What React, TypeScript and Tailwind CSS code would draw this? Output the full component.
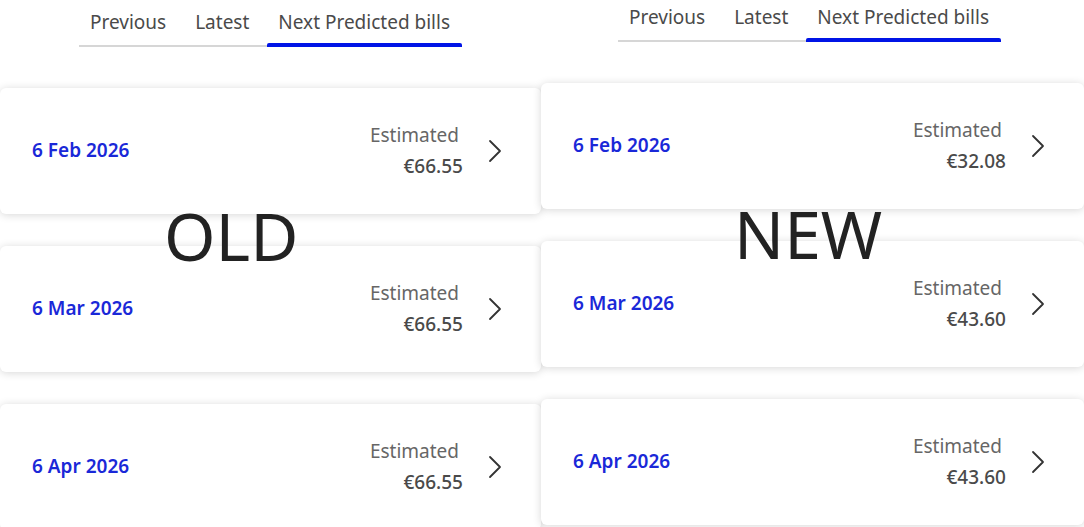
type Bill = { date: string; amount: string };

const oldBills: Bill[] = [
  { date: '6 Feb 2026', amount: '€66.55' },
  { date: '6 Mar 2026', amount: '€66.55' },
  { date: '6 Apr 2026', amount: '€66.55' },
];

const newBills: Bill[] = [
  { date: '6 Feb 2026', amount: '€32.08' },
  { date: '6 Mar 2026', amount: '€43.60' },
  { date: '6 Apr 2026', amount: '€43.60' },
];

function Tabs({ shift }: { shift: string }) {
  return (
    <div className={`flex justify-center ${shift}`}>
      <div className="flex border-b-2 border-[#d6d6d6]">
        <div className="px-[11px] pb-[8px] text-[#4a4a4a]">Previous</div>
        <div className="ml-[7px] px-[11px] pb-[8px] text-[#4a4a4a]">Latest</div>
        <div className="relative ml-[7px] pl-[11px] pr-[12px] pb-[8px] text-[#4a4a4a]">
          Next Predicted bills
          <span className="absolute -bottom-[2px] left-0 right-0 h-[4px] rounded-t-[2px] bg-[#0014e6]" />
        </div>
      </div>
    </div>
  );
}

function Chevron() {
  return (
    <svg width="14" height="24" viewBox="0 0 14 24" fill="none" className="ml-[25px] text-[#333333]">
      <polyline points="2,2 12,12 2,22" stroke="currentColor" strokeWidth="1.8" strokeLinecap="round" strokeLinejoin="round" />
    </svg>
  );
}

function BillCard({ bill }: { bill: Bill }) {
  return (
    <div className="flex h-[126px] items-center rounded-[6px] bg-white pl-[32px] pr-[39px] shadow-[0_1px_8px_rgba(0,0,0,0.16)]">
      <div className="flex-1 font-semibold text-[#1a28d8]">{bill.date}</div>
      <div className="flex flex-col items-end leading-[31px]">
        <span className="mr-[4px] text-[#666666]">Estimated</span>
        <span className="font-medium text-[#4a4a4a]">{bill.amount}</span>
      </div>
      <Chevron />
    </div>
  );
}

function Panel({
  bills,
  label,
  top,
  labelPos,
  shift,
}: {
  bills: Bill[];
  label: string;
  top: string;
  labelPos: string;
  shift: string;
}) {
  return (
    <div className={`relative flex flex-1 flex-col ${top}`}>
      <Tabs shift={shift} />
      <div className="mt-[41px] flex flex-col gap-[32px]">
        {bills.map((b) => (
          <BillCard key={b.date} bill={b} />
        ))}
      </div>
      <div
        className={`pointer-events-none absolute text-[66px] font-normal leading-none text-[#222222] ${labelPos}`}
      >
        {label}
      </div>
    </div>
  );
}

export default function App() {
  return (
    <div className="flex h-[527px] w-[1084px] overflow-hidden bg-white text-[19px] font-['Noto_Sans',sans-serif]">
      <div className="flex w-[541px]">
        <Panel bills={oldBills} label="OLD" top="pt-[8px]" labelPos="left-[164px] top-[202px]" shift="" />
      </div>
      <div className="flex w-[543px]">
        <Panel
          bills={newBills}
          label="NEW"
          top="pt-[3px]"
          labelPos="left-[193px] top-[200px]"
          shift="pr-[6px]"
        />
      </div>
    </div>
  );
}
